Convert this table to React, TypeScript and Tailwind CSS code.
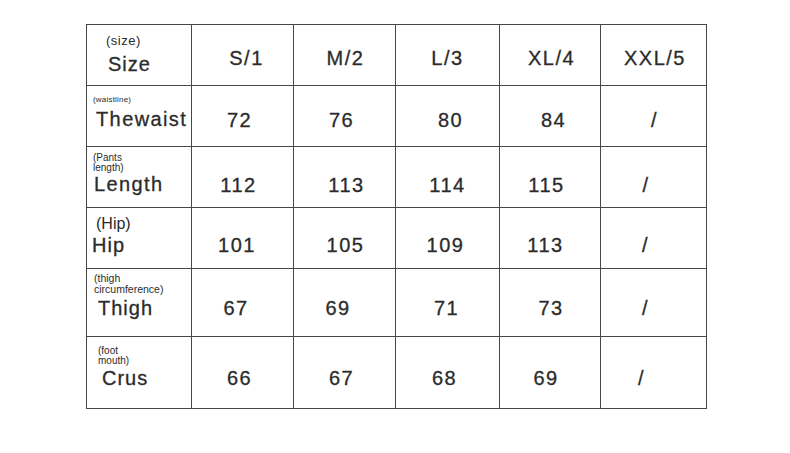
import React from 'react';

type Cell = { v: string; c: string };

type Row = {
  label: React.ReactNode;
  pad: string;
  cells: Cell[];
};

// main text is a bit heavier than plain Liberation Sans in the picture
const big = 'text-[20px] leading-[20px] [-webkit-text-stroke:0.3px]';

const rows: Row[] = [
  {
    label: (
      <div className="flex flex-col pt-[8px]">
        <span className="ml-[19px] text-[13px] leading-[16px] tracking-[0.5px]">(size)</span>
        <span className={`ml-[21px] mt-[5px] tracking-[1px] ${big}`}>Size</span>
      </div>
    ),
    pad: 'pt-[6px]',
    cells: [
      { v: 'S/1', c: 'pl-[8px]' },
      { v: 'M/2', c: 'pl-[2px]' },
      { v: 'L/3', c: '' },
      { v: 'XL/4', c: 'pl-[3px]' },
      { v: 'XXL/5', c: 'pl-[3px]' },
    ],
  },
  {
    label: (
      <div className="flex flex-col pt-[10px]">
        <span className="ml-[6px] text-[8px] leading-[8px] tracking-[0.2px]">(waistline)</span>
        <span className={`ml-[9px] mt-[5px] tracking-[1.4px] ${big}`}>Thewaist</span>
      </div>
    ),
    pad: 'pt-[8px]',
    cells: [
      { v: '72', c: 'pr-[6px]' },
      { v: '76', c: 'pr-[6px]' },
      { v: '80', c: 'pl-[6px]' },
      { v: '84', c: 'pl-[7px]' },
      { v: '/', c: 'pl-[2px]' },
    ],
  },
  {
    label: (
      <div className="flex flex-col pt-[6px]">
        <span className="ml-[6px] text-[10px] leading-[10px]">(Pants</span>
        <span className="ml-[6px] text-[10px] leading-[10px]">length)</span>
        <span className={`ml-[7px] mt-[1px] tracking-[1.4px] ${big}`}>Length</span>
      </div>
    ),
    pad: 'pt-[16px]',
    cells: [
      { v: '112', c: 'pr-[8px]' },
      { v: '113', c: 'pl-[4px]' },
      { v: '114', c: '' },
      { v: '115', c: 'pr-[7px]' },
      { v: '/', c: 'pr-[15px]' },
    ],
  },
  {
    label: (
      <div className="flex flex-col pt-[8px]">
        <span className="ml-[9px] text-[16px] leading-[16px]">(Hip)</span>
        <span className={`ml-[5px] mt-[3px] tracking-[1px] ${big}`}>Hip</span>
      </div>
    ),
    pad: 'pt-[14px]',
    cells: [
      { v: '101', c: 'pr-[11px]' },
      { v: '105', c: 'pl-[2px]' },
      { v: '109', c: 'pr-[4px]' },
      { v: '113', c: 'pr-[9px]' },
      { v: '/', c: 'pr-[16px]' },
    ],
  },
  {
    label: (
      <div className="flex flex-col pt-[4px]">
        <span className="ml-[7px] text-[10.5px] leading-[11px]">(thigh</span>
        <span className="ml-[7px] text-[10.5px] leading-[11px]">circumference)</span>
        <span className={`ml-[11px] mt-[3px] tracking-[1px] ${big}`}>Thigh</span>
      </div>
    ),
    pad: 'pt-[10px]',
    cells: [
      { v: '67', c: 'pr-[13px]' },
      { v: '69', c: 'pr-[13px]' },
      { v: '71', c: 'pr-[2px]' },
      { v: '73', c: 'pl-[2px]' },
      { v: '/', c: 'pr-[16px]' },
    ],
  },
  {
    label: (
      <div className="flex flex-col pt-[9px]">
        <span className="ml-[11px] text-[10px] leading-[10px]">(foot</span>
        <span className="ml-[11px] text-[10px] leading-[10px]">mouth)</span>
        <span className={`ml-[15px] mt-[2px] tracking-[1px] ${big}`}>Crus</span>
      </div>
    ),
    pad: 'pt-[11px]',
    cells: [
      { v: '66', c: 'pr-[6px]' },
      { v: '67', c: 'pr-[6px]' },
      { v: '68', c: 'pr-[6px]' },
      { v: '69', c: 'pr-[8px]' },
      { v: '/', c: 'pr-[24px]' },
    ],
  },
];

export default function App() {
  return (
    <div className="min-h-screen bg-white pl-[86px] pt-[24px] font-['Liberation_Sans',Arial,sans-serif] text-[#2b2b2b]">
      <div className="grid w-fit grid-cols-[104px_101px_101px_103px_100px_105px] grid-rows-[60px_60px_60px_60px_67px_71px] gap-px bg-[#474747] p-px">
        {rows.map((row, i) => (
          <React.Fragment key={i}>
            <div className="bg-white">{row.label}</div>
            {row.cells.map((cell, j) => (
              <div key={j} className={`flex items-center justify-center bg-white ${row.pad}`}>
                <span className={`text-[20px] leading-none tracking-[1.5px] [-webkit-text-stroke:0.3px] ${cell.c}`}>
                  {cell.v}
                </span>
              </div>
            ))}
          </React.Fragment>
        ))}
      </div>
    </div>
  );
}
